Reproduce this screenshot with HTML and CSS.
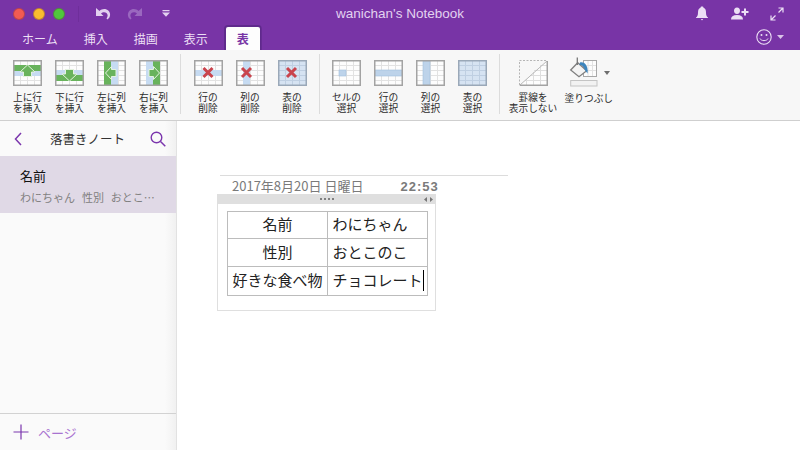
FILE: index.html
```html
<!DOCTYPE html>
<html lang="ja">
<head>
<meta charset="utf-8">
<title>wanichan's Notebook</title>
<link rel="stylesheet" href="styles.css">
</head>
<body>
<svg class="defs" width="0" height="0" aria-hidden="true">
  <defs>
    <g id="grid">
      <rect x="0.5" y="0.5" width="28" height="25" fill="#fdfdfd"/>
      <path d="M7.5 1V25M14.5 1V25M21.5 1V25M1 5.5H28M1 10.5H28M1 15.5H28M1 20.5H28" stroke="#e2e2e2" fill="none"/>
    </g>
    <rect id="frame" x="0.75" y="0.75" width="27.5" height="24.5" fill="none" stroke="#a3a3a3" stroke-width="1.5"/>
    <path id="cross" d="M-4.5 -4.5L4.5 4.5M4.5 -4.5L-4.5 4.5" stroke="#c9444d" stroke-width="3" fill="none"/>
  </defs>
</svg>
<div class="app">
  <header class="chrome">
    <div class="titlebar">
      <div class="title-left">
        <span class="light light-red"></span>
        <span class="light light-yellow"></span>
        <span class="light light-green"></span>
        <span class="qat-sep"></span>
        <svg class="qat-undo" width="16" height="13" viewBox="0 0 16 13"><path d="M1 1V9H8.500L6 6.500C7.500 5 10 4.800 11.500 6C13 7.300 13 9.500 11.500 11.500L12.500 12.500C15.500 10.500 16 6.500 13.500 3.800C11 1.300 7 1.500 4.500 4Z" fill="#e2d0ef"/></svg>
        <svg class="qat-redo" width="16" height="13" viewBox="0 0 16 13"><path d="M15 1V9H7.500L10 6.500C8.500 5 6 4.800 4.500 6C3 7.300 3 9.500 4.500 11.500L3.500 12.500C.5 10.500 0 6.500 2.500 3.800C5 1.300 9 1.500 11.500 4Z" fill="#9a68bf"/></svg>
        <svg class="qat-more" width="8" height="7" viewBox="0 0 8 7"><path d="M0.500 0H7.500V1.200H0.500ZM0 2.500H8L4 6.800Z" fill="#e2d0ef"/></svg>
      </div>
      <div class="doc-title">wanichan's Notebook</div>
      <div class="title-right">
        <svg class="bell" width="12" height="15" viewBox="0 0 12 15"><path d="M6 0.500C7 0.500 7.500 1 7.500 1.800C9.500 2.500 10 4.500 10 6.500C10 9 10.500 10.500 12 11.500V12H0V11.500C1.500 10.500 2 9 2 6.500C2 4.500 2.500 2.500 4.500 1.800C4.500 1 5 0.500 6 0.500ZM4.800 13H7.200L6 14.500Z" fill="#ecdff5"/></svg>
        <svg width="18" height="13" viewBox="0 0 18 13"><path d="M6 0.500C8 0.500 9 2 9 3.800C9 5.500 8 7 6 7C4 7 3 5.500 3 3.800C3 2 4 0.500 6 0.500ZM0 12.500C0 9.500 2 8 6 8C10 8 12 9.500 12 12.500ZM13 1.500H15V4H17.500V6H15V8.500H13V6H10.500V4H13Z" fill="#ecdff5"/></svg>
        <svg width="14" height="14" viewBox="0 0 14 14"><path d="M8.500 1H13V5.500M13 1L8.500 5.500M5.500 13H1V8.500M1 13L5.500 8.500" stroke="#ecdff5" stroke-width="1.200" fill="none"/></svg>
      </div>
    </div>
    <nav class="tabs">
      <span class="tab">ホーム</span>
      <span class="tab">挿入</span>
      <span class="tab">描画</span>
      <span class="tab">表示</span>
      <span class="tab tab-active">表</span>
      <span class="smile">
        <svg width="16" height="16" viewBox="0 0 16 16"><circle cx="8" cy="8" r="7.200" fill="none" stroke="#ecdff5" stroke-width="1.100"/><circle cx="5.500" cy="6" r="1" fill="#ecdff5"/><circle cx="10.500" cy="6" r="1" fill="#ecdff5"/><path d="M4 9.500C5 12.300 11 12.300 12 9.500" fill="none" stroke="#ecdff5"/></svg>
        <svg width="7" height="4" viewBox="0 0 7 4"><path d="M0 0H7L3.500 4Z" fill="#d9c3e8"/></svg>
      </span>
    </nav>
  </header>

  <section class="ribbon">
    <div class="rgroup">
      <div class="rbtn">
        <svg class="ricon" viewBox="0 0 29 26"><use href="#grid"/><rect x="1" y="11" width="27" height="5" fill="#c6dbf2"/><rect x="1" y="5" width="27" height="6" fill="#68b35c"/><path d="M14.500 5L22 12H18.500V16.500H10.500V12H7Z" fill="#68b35c" stroke="#e4f2df"/><use href="#frame"/></svg>
        <span class="rlabel">上に行<br>を挿入</span>
      </div>
      <div class="rbtn">
        <svg class="ricon" viewBox="0 0 29 26"><use href="#grid"/><rect x="1" y="10" width="27" height="5" fill="#c6dbf2"/><rect x="1" y="15" width="27" height="6" fill="#68b35c"/><path d="M14.500 21L22 14H18.500V9.500H10.500V14H7Z" fill="#68b35c" stroke="#e4f2df"/><use href="#frame"/></svg>
        <span class="rlabel">下に行<br>を挿入</span>
      </div>
      <div class="rbtn">
        <svg class="ricon" viewBox="0 0 29 26"><use href="#grid"/><rect x="14" y="1" width="7" height="24" fill="#c6dbf2"/><rect x="7" y="0.500" width="7" height="25" fill="#68b35c"/><path d="M8.500 13L14.500 6.500V9.500H19V16.500H14.500V19.500Z" fill="#68b35c" stroke="#e4f2df"/><use href="#frame"/></svg>
        <span class="rlabel">左に列<br>を挿入</span>
      </div>
      <div class="rbtn">
        <svg class="ricon" viewBox="0 0 29 26"><use href="#grid"/><rect x="7" y="1" width="7" height="24" fill="#c6dbf2"/><rect x="14" y="0.500" width="7" height="25" fill="#68b35c"/><path d="M20.500 13L14.500 6.500V9.500H10V16.500H14.500V19.500Z" fill="#68b35c" stroke="#e4f2df"/><use href="#frame"/></svg>
        <span class="rlabel">右に列<br>を挿入</span>
      </div>
    </div>
    <span class="rsep"></span>
    <div class="rgroup">
      <div class="rbtn">
        <svg class="ricon" viewBox="0 0 29 26"><use href="#grid"/><rect x="1" y="10" width="27" height="6" fill="#c6dbf2"/><use href="#frame"/><use href="#cross" x="14" y="12.500"/></svg>
        <span class="rlabel">行の<br>削除</span>
      </div>
      <div class="rbtn">
        <svg class="ricon" viewBox="0 0 29 26"><use href="#grid"/><rect x="7" y="1" width="7" height="24" fill="#c6dbf2"/><use href="#frame"/><use href="#cross" x="10.500" y="12.500"/></svg>
        <span class="rlabel">列の<br>削除</span>
      </div>
      <div class="rbtn">
        <svg class="ricon" viewBox="0 0 29 26"><rect x="0.500" y="0.500" width="28" height="25" fill="#d6e3f2"/><path d="M7.500 1V25M14.500 1V25M21.500 1V25M1 5.500H28M1 10.500H28M1 15.500H28M1 20.500H28" stroke="#bfcfe2"/><rect x="0.750" y="0.750" width="27.500" height="24.500" fill="none" stroke="#9aa8b8" stroke-width="1.500"/><use href="#cross" x="13.500" y="12.500"/></svg>
        <span class="rlabel">表の<br>削除</span>
      </div>
    </div>
    <span class="rsep"></span>
    <div class="rgroup">
      <div class="rbtn">
        <svg class="ricon" viewBox="0 0 29 26"><use href="#grid"/><rect x="7" y="10" width="7" height="6" fill="#bdd3ea" stroke="#a2bfdd" stroke-width="0.600"/><use href="#frame"/></svg>
        <span class="rlabel">セルの<br>選択</span>
      </div>
      <div class="rbtn">
        <svg class="ricon" viewBox="0 0 29 26"><use href="#grid"/><rect x="1" y="10" width="27" height="6" fill="#bdd3ea" stroke="#a2bfdd" stroke-width="0.600"/><use href="#frame"/></svg>
        <span class="rlabel">行の<br>選択</span>
      </div>
      <div class="rbtn">
        <svg class="ricon" viewBox="0 0 29 26"><use href="#grid"/><rect x="7" y="1" width="7" height="24" fill="#bdd3ea" stroke="#a2bfdd" stroke-width="0.600"/><use href="#frame"/></svg>
        <span class="rlabel">列の<br>選択</span>
      </div>
      <div class="rbtn">
        <svg class="ricon" viewBox="0 0 29 26"><rect x="0.500" y="0.500" width="28" height="25" fill="#d6e3f2"/><path d="M7.500 1V25M14.500 1V25M21.500 1V25M1 5.500H28M1 10.500H28M1 15.500H28M1 20.500H28" stroke="#bfcfe2"/><rect x="0.750" y="0.750" width="27.500" height="24.500" fill="none" stroke="#9aa8b8" stroke-width="1.500"/></svg>
        <span class="rlabel">表の<br>選択</span>
      </div>
    </div>
    <span class="rsep"></span>
    <div class="rgroup rgroup-last">
      <div class="rbtn rbtn-border">
        <svg class="ricon" viewBox="0 0 29 26"><path d="M28 1V25H1Z" fill="#fdfdfd"/><path d="M7.500 19V25M14.500 12V25M21.500 6V25M21 5.500H28M15 10.500H28M11 15.500H28M6 20.500H28" stroke="#dedede" fill="none"/><path d="M1 25L28 1" stroke="#b8b8b8"/><path d="M28.250 1V25.250H0.750" stroke="#a3a3a3" stroke-width="1.500" fill="none"/><path d="M0.500 25V0.500H28" stroke="#b5b5b5" stroke-dasharray="2 1.500" fill="none"/></svg>
        <span class="rlabel">罫線を<br>表示しない</span>
      </div>
      <div class="rbtn rbtn-fill">
        <div class="fill-top">
          <svg class="fill-icon" viewBox="0 0 32 30">
            <rect x="16.500" y="3.500" width="13" height="16" fill="#fdfdfd" stroke="#a8a8a8"/>
            <path d="M21 4V19M25.500 4V19M17 8.500H29M17 13.500H29" stroke="#e2e2e2"/>
            <path d="M3.700 13L10.700 5.700L19.700 13.700L12 19.700Z" fill="#f4f4f4" stroke="#7f7f7f" stroke-width="1.300"/>
            <path d="M10.300 8V0.500" stroke="#777" stroke-width="1.300"/>
            <path d="M13 5.500C18 4.500 21.500 9.500 20.500 16.500L17.500 12.500C17.500 10 15 8 12.500 8Z" fill="#3d85bd"/>
            <rect x="3.700" y="23.500" width="26.300" height="5.500" fill="#f2f2f2" stroke="#c4c4c4"/>
          </svg>
          <svg class="fill-caret" width="6" height="4" viewBox="0 0 6 4"><path d="M0 0H6L3 4Z" fill="#6e6e6e"/></svg>
        </div>
        <span class="rlabel rlabel-fill">塗りつぶし</span>
      </div>
    </div>
  </section>

  <div class="body">
    <aside class="sidebar">
      <div class="side-head">
        <svg class="side-back" width="8" height="14" viewBox="0 0 8 14"><path d="M7 1L1.500 7L7 13" fill="none" stroke="#7b36ad" stroke-width="1.500"/></svg>
        <span class="side-title">落書きノート</span>
        <svg class="side-search" width="16" height="16" viewBox="0 0 16 16"><circle cx="6.500" cy="6.500" r="5.300" fill="none" stroke="#7b36ad" stroke-width="1.400"/><path d="M10.500 10.500L15.300 15.300" stroke="#7b36ad" stroke-width="1.500"/></svg>
      </div>
      <div class="page-item">
        <div class="page-name">名前</div>
        <div class="page-sub">わにちゃん&nbsp;&nbsp;性別&nbsp;&nbsp;おとこ…</div>
      </div>
      <div class="side-fill"></div>
      <div class="side-foot">
        <svg width="16" height="16" viewBox="0 0 16 16"><path d="M8 0.500V15.500M0.500 8H15.500" stroke="#7b36ad" stroke-width="1.200"/></svg>
        <span class="add-page">ページ</span>
      </div>
    </aside>
    <main class="canvas">
      <div class="note-head">
        <span class="note-date">2017年8月20日 日曜日</span>
        <span class="note-time">22:53</span>
      </div>
      <div class="note-box">
        <div class="note-bar">
          <svg width="14" height="2" viewBox="0 0 14 2"><path d="M0 0H2V2H0ZM4 0H6V2H4ZM8 0H10V2H8ZM12 0H14V2H12Z" fill="#808080"/></svg>
          <svg class="note-resize" width="9" height="5" viewBox="0 0 9 5"><path d="M3 0V5L0 2.500ZM6 0V5L9 2.500Z" fill="#777"/></svg>
        </div>
        <table class="note-table">
          <tr class="row-a"><td class="cell-key">名前</td><td class="cell-val">わにちゃん</td></tr>
          <tr class="row-b"><td class="cell-key">性別</td><td class="cell-val">おとこのこ</td></tr>
          <tr class="row-c"><td class="cell-key">好きな食べ物</td><td class="cell-val">チョコレート<span class="caret"></span></td></tr>
        </table>
      </div>
    </main>
  </div>
</div>
</body>
</html>
```
FILE: styles.css
```css
html, body {
  margin: 0;
  padding: 0;
}
body {
  width: 800px;
  height: 450px;
  overflow: hidden;
  background: #fff;
  font-family: "Noto Sans CJK JP", "Liberation Sans", sans-serif;
  color: #222;
}
.defs {
  position: absolute;
}
.app {
  display: flex;
  flex-direction: column;
  width: 800px;
  height: 450px;
}

/* title bar */
.chrome {
  height: 50px;
  flex: none;
  background: #7834a6;
  display: flex;
  flex-direction: column;
}
.titlebar {
  height: 27px;
  flex: none;
  display: grid;
  grid-template-columns: 1fr auto 1fr;
  align-items: center;
}
.title-left {
  display: flex;
  align-items: center;
  padding-left: 13px;
}
.light {
  width: 12px;
  height: 12px;
  border-radius: 50%;
  margin-right: 8px;
  box-sizing: border-box;
  border: 1px solid rgba(90, 30, 60, .35);
}
.light-red { background: #f25b53; }
.light-yellow { background: #f9bd2f; }
.light-green { background: #50c83c; }
.qat-sep {
  width: 1px;
  height: 16px;
  background: #6f2e9b;
  margin-left: 5px;
}
.qat-undo { margin-left: 16px; }
.qat-redo { margin-left: 16px; }
.qat-more { margin-left: 19px; }
.doc-title {
  font-family: "Liberation Sans", sans-serif;
  font-size: 13.500px;
  color: #e3d2f0;
}
.title-right {
  display: flex;
  align-items: center;
  justify-content: flex-end;
  gap: 21px;
  padding-right: 16px;
}
.bell {
  margin-right: 2px;
}

/* tabs */
.tabs {
  height: 23px;
  flex: none;
  display: flex;
  align-items: stretch;
  padding-left: 9px;
  font-size: 12px;
  color: #ecdff5;
}
.tab {
  display: flex;
  align-items: center;
  padding: 0 13px;
  line-height: 1;
}
.tab-active {
  background: #fdfdfd;
  color: #7834a6;
  font-weight: 700;
  padding: 0 11px;
  margin-left: 5px;
  border-radius: 2px 2px 0 0;
  box-shadow: 0 0 0 2px #5f2a8c;
  clip-path: inset(-2px -2px 0 -2px);
}
.smile {
  margin-left: auto;
  display: flex;
  align-items: center;
  gap: 5px;
  padding: 0 16px 3px 0;
}

/* ribbon */
.ribbon {
  height: 71px;
  box-sizing: border-box;
  flex: none;
  display: flex;
  align-items: stretch;
  padding: 4px 0 6px 6.500px;
  background: #f7f7f7;
  border-bottom: 1px solid #cfcfcf;
}
.rgroup {
  display: flex;
}
.rsep {
  width: 1px;
  background: #dcdcdc;
  margin: 0 6px 0 5.500px;
}
.rbtn {
  width: 42px;
  display: flex;
  flex-direction: column;
  align-items: center;
}
.ricon {
  width: 29px;
  height: 26px;
  margin-top: 6px;
  flex: none;
}
.rlabel {
  margin-top: 6px;
  font-size: 9.700px;
  line-height: 11px;
  text-align: center;
  color: #2b2b2b;
  white-space: nowrap;
}
.rbtn-border {
  width: 54px;
}
.rbtn-fill {
  width: 56px;
  margin-left: 2px;
  align-items: flex-start;
}
.fill-top {
  display: flex;
  align-items: flex-start;
  height: 32px;
  padding-left: 4.500px;
  flex: none;
}
.fill-icon {
  width: 32px;
  height: 30px;
  margin-top: 3px;
  flex: none;
}
.fill-caret {
  margin: 17px 0 0 5px;
}
.rlabel-fill {
  margin-top: 6.500px;
  padding-left: 2.500px;
}

/* body */
.body {
  flex: 1;
  display: flex;
  min-height: 0;
}
.sidebar {
  width: 177px;
  box-sizing: border-box;
  flex: none;
  display: flex;
  flex-direction: column;
  background: linear-gradient(90deg, #fafafa 0, #fafafa 165px, #f1f1f1 176px);
  border-right: 1px solid #e2e2e2;
}
.side-head {
  height: 35px;
  flex: none;
  display: flex;
  align-items: center;
  padding: 0 10px 0 14px;
}
.side-title {
  flex: 1;
  text-align: center;
  font-size: 12.500px;
  color: #333;
  padding-left: 3px;
}
.page-item {
  height: 57px;
  box-sizing: border-box;
  flex: none;
  background: #e0d9e6;
  padding: 10px 0 0 20px;
}
.page-name {
  font-size: 13px;
  line-height: 20px;
  color: #111;
}
.page-sub {
  font-size: 11px;
  line-height: 16px;
  margin-top: 3px;
  color: #808080;
  white-space: nowrap;
  word-spacing: 1px;
}
.side-fill {
  flex: 1;
}
.side-foot {
  height: 37px;
  flex: none;
  box-sizing: border-box;
  border-top: 1px solid #d2d2d2;
  display: flex;
  align-items: center;
  gap: 9px;
  padding-left: 13px;
}
.add-page {
  font-size: 13px;
  color: #a873d0;
}

/* note */
.canvas {
  flex: 1;
  padding: 54px 0 0 43px;
  background: #fff;
}
.note-head {
  width: 288px;
  height: 19px;
  box-sizing: border-box;
  border-top: 1px solid #dcdcdc;
  padding-left: 12px;
  display: flex;
  align-items: baseline;
  font-size: 13px;
  color: #7a7a7a;
  line-height: 19px;
}
.note-time {
  margin-left: 37px;
  font-family: "Liberation Sans", sans-serif;
  font-weight: 700;
  font-size: 13px;
  letter-spacing: 1px;
}
.note-box {
  width: 219px;
  height: 117px;
  box-sizing: border-box;
  margin-left: -3px;
  border: 1px solid #dfdfdf;
  border-top: 0;
}
.note-bar {
  height: 10px;
  background: #dfdfdf;
  display: flex;
  align-items: center;
  position: relative;
  justify-content: center;
}
.note-resize {
  position: absolute;
  right: 2px;
  top: 2.500px;
}
.note-table {
  border-collapse: collapse;
  margin: 7px 0 0 9px;
  width: 201px;
  table-layout: fixed;
  font-size: 15px;
  line-height: 20px;
}
.note-table td {
  border: 1px solid #bcbcbc;
  padding: 0 0 2px;
  box-sizing: border-box;
  white-space: nowrap;
}
.row-a td { height: 27px; }
.row-b td { height: 28px; }
.row-c td { height: 29px; }
.cell-key {
  width: 100px;
  text-align: center;
}
.note-table .cell-val {
  padding-left: 4.500px;
}
.caret {
  display: inline-block;
  width: 1px;
  height: 21px;
  background: #000;
  vertical-align: -5px;
}
```
